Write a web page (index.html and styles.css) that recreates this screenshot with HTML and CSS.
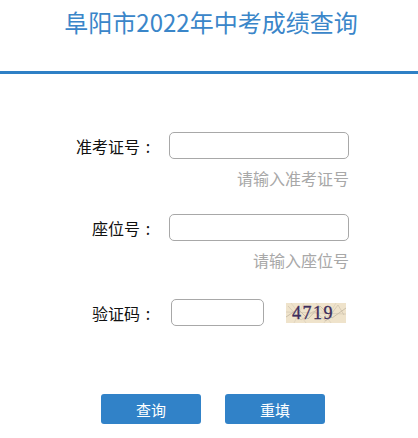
FILE: index.html
```html
<!DOCTYPE html>
<html lang="zh-CN">
<head>
<meta charset="utf-8">
<title>阜阳市2022年中考成绩查询</title>
<link rel="stylesheet" href="styles.css">
</head>
<body>
<div class="header">
  <h1 class="title">阜阳市2022年中考成绩查询</h1>
</div>
<form class="form">
  <div class="row">
    <label class="label">准考证号<span class="colon">:</span></label>
    <input class="input" type="text">
  </div>
  <div class="hint">请输入准考证号</div>
  <div class="row row-2">
    <label class="label">座位号<span class="colon">:</span></label>
    <input class="input" type="text">
  </div>
  <div class="hint">请输入座位号</div>
  <div class="row row-3">
    <label class="label">验证码<span class="colon">:</span></label>
    <input class="input input-code" type="text">
    <div class="captcha">
      <svg class="noise" width="60" height="20" viewBox="0 0 60 20">
        <path d="M0 14 L12 6 L22 16 L34 3 L46 15 L60 5" stroke="#b3a793" stroke-width="0.6" fill="none"/>
        <path d="M2 3 L15 17 L28 8 L40 18 L52 2 L58 12" stroke="#bfb39e" stroke-width="0.5" fill="none"/>
        <path d="M0 9 L60 11" stroke="#c8bdab" stroke-width="0.5" fill="none"/>
        <path d="M5 0 L20 20 M30 0 L45 20 M18 0 L8 20 M50 0 L38 20" stroke="#cdc1ab" stroke-width="0.4" fill="none"/>
      </svg>
      <span class="code">4719</span>
    </div>
  </div>
  <div class="buttons">
    <button type="button" class="btn">查询</button>
    <button type="button" class="btn">重填</button>
  </div>
</form>
</body>
</html>
```
FILE: styles.css
```css
* { box-sizing: border-box; }
body {
  margin: 0;
  background: #fff;
  font-family: "Noto Sans CJK SC", "Noto Sans", sans-serif;
  color: #111;
}
.header {
  height: 74px;
  border-bottom: 3px solid #2f80c5;
  padding-top: 5px;
}
.title {
  margin: 0;
  text-align: center;
  font-size: 24px;
  font-weight: normal;
  line-height: 34px;
  color: #3a86c9;
  padding-left: 4px;
}
.form {
  padding-top: 58px;
  margin: 0;
}
.row {
  display: flex;
  align-items: center;
  height: 27px;
}
.row-2 { margin-top: 25px; }
.row-3 { margin-top: 28px; }
.label {
  width: 156px;
  text-align: right;
  font-size: 16px;
  line-height: 22px;
  color: #111;
}
.colon {
  display: inline-block;
  width: 16px;
  text-align: center;
}
.input {
  margin: 0 0 0 13px;
  width: 180px;
  height: 27px;
  border: 1px solid #a8a8a8;
  border-radius: 5px;
  background: #fff;
  padding: 0 6px;
  font-size: 14px;
}
.input-code {
  margin-left: 15px;
  width: 93px;
}
.hint {
  width: 349px;
  text-align: right;
  margin-top: 8px;
  height: 22px;
  line-height: 22px;
  font-size: 16px;
  color: #a8a8a8;
}
.captcha {
  position: relative;
  margin-left: 22px;
  width: 60px;
  height: 20px;
  background: #efe3cb;
  overflow: hidden;
}
.noise {
  position: absolute;
  left: 0;
  top: 0;
}
.code {
  position: relative;
  display: block;
  text-align: left;
  font-family: "Liberation Serif", "DejaVu Serif", serif;
  font-size: 18px;
  line-height: 20px;
  letter-spacing: 1.5px;
  padding-left: 6px;
  color: #3d2d5c;
  -webkit-text-stroke: 0.3px #3d2d5c;
}
.buttons {
  display: flex;
  gap: 24px;
  padding-left: 101px;
  margin-top: 68px;
}
.btn {
  width: 100px;
  height: 30px;
  border: 0;
  border-radius: 3px;
  background: #3182c8;
  color: #fff;
  font-family: "Noto Sans CJK SC", sans-serif;
  font-size: 15px;
  padding: 0;
}
```
